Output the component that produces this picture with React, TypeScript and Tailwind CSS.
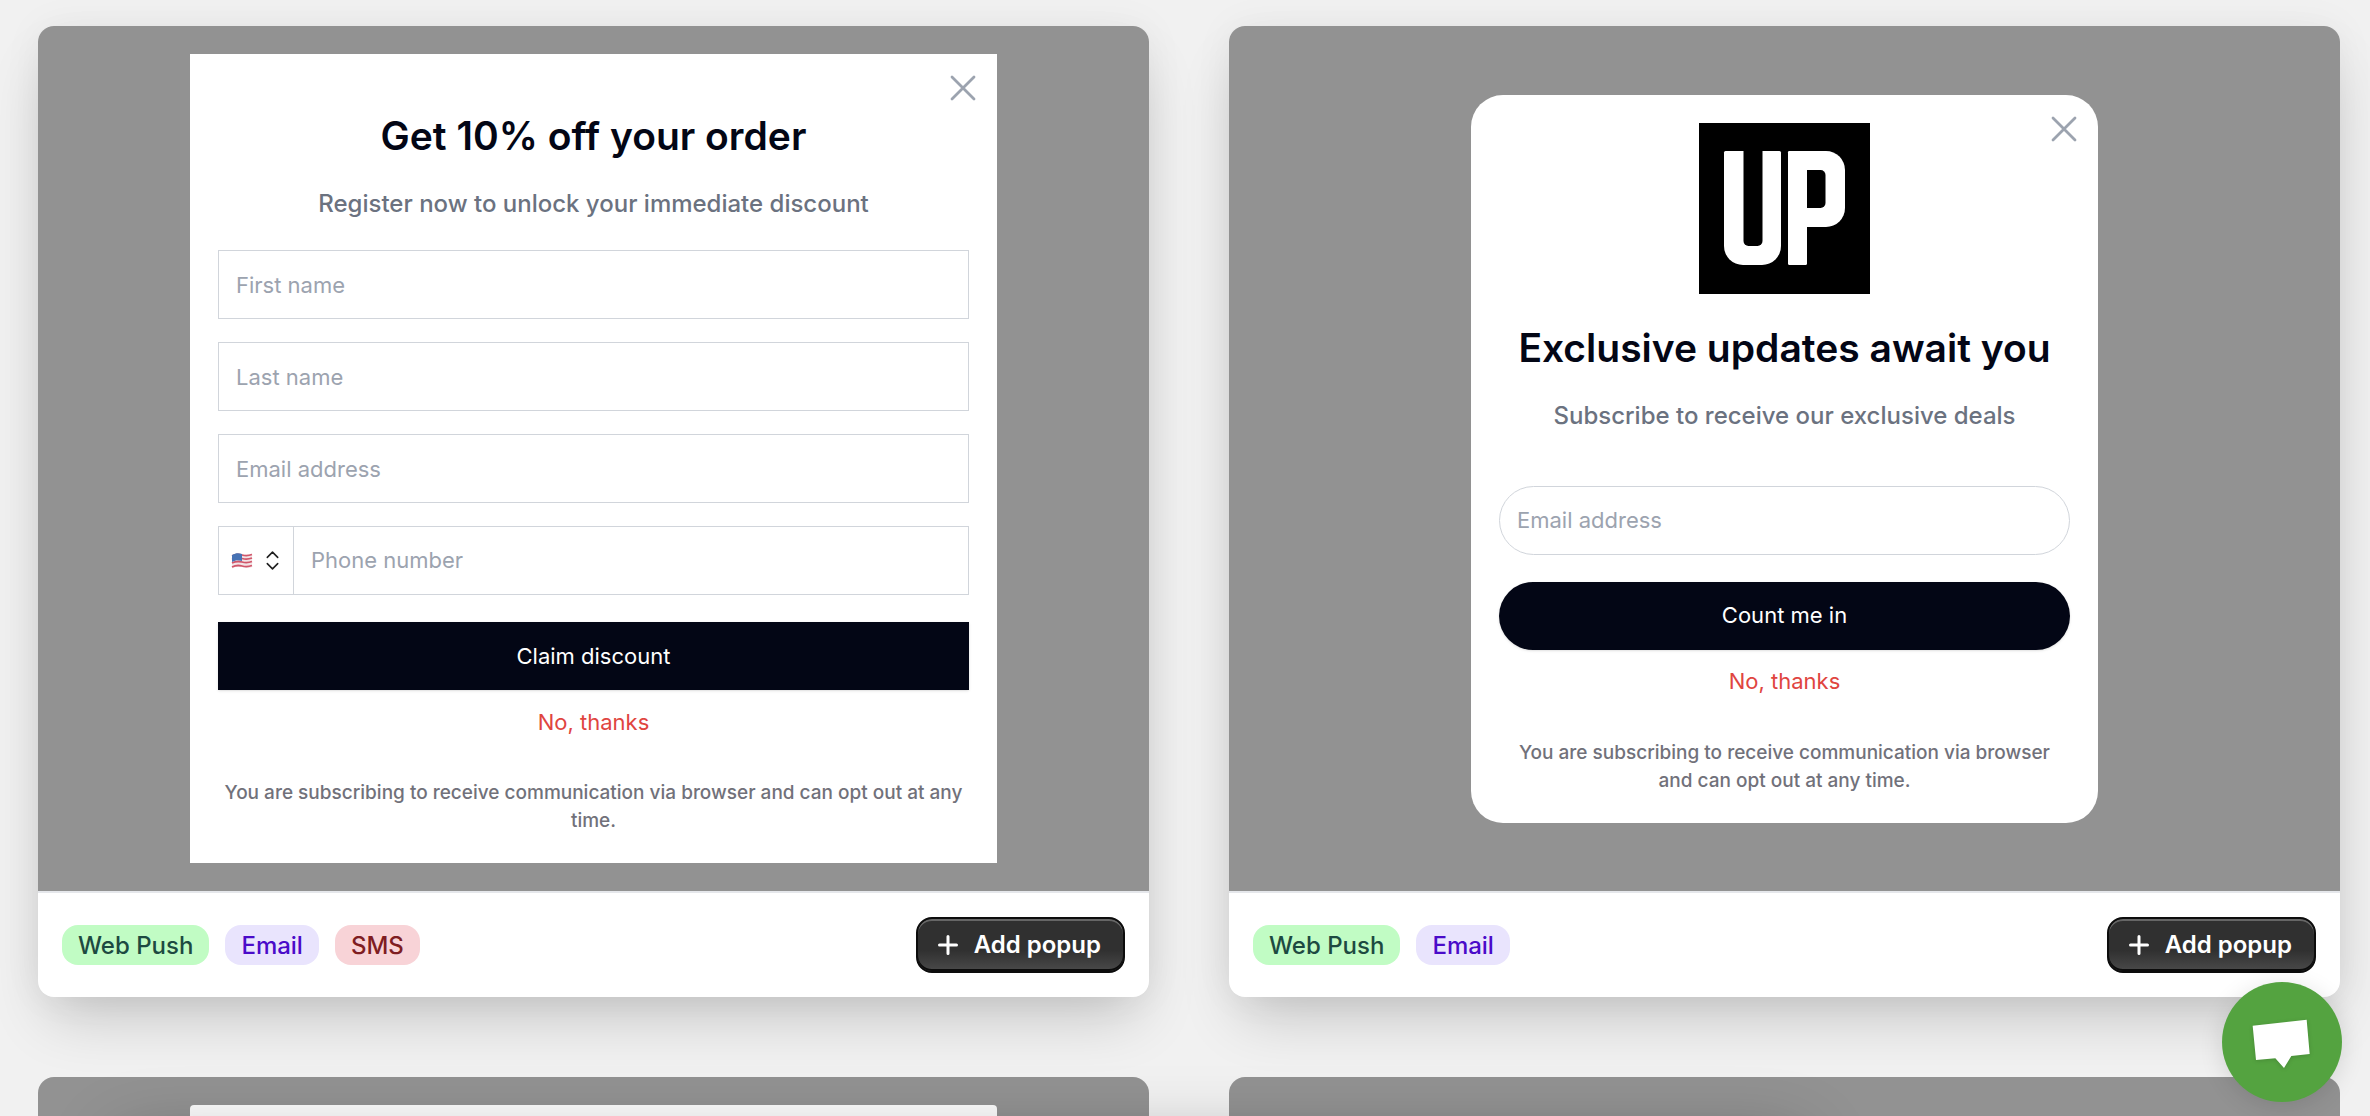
import type { ReactNode } from 'react'
import { ChevronsUpDown } from 'lucide-react'

const TAG_STYLES = {
  'Web Push': 'bg-[#c1fcc4] text-[#1d4a41]',
  Email: 'bg-[#e9e4fd] text-[#4a0bc9]',
  SMS: 'bg-[#f8d3d7] text-[#7f1d22]',
}

type Tag = keyof typeof TAG_STYLES

export default function App() {
  return (
    <main className="h-screen overflow-hidden bg-[#f1f1f1] pt-[26px] pr-[30px] pl-[38px] font-['Inter',sans-serif]">
      <div className="grid grid-cols-2 gap-20">
        <TemplateCard tags={['Web Push', 'Email', 'SMS']}>
          <DiscountPopup />
        </TemplateCard>
        <TemplateCard tags={['Web Push', 'Email']}>
          <UpdatesPopup />
        </TemplateCard>

        <div className="flex h-[865px] items-center justify-center rounded-t-2xl bg-[#929292] p-7">
          <div className="h-full w-[807px] rounded bg-[#fcfcfc]" />
        </div>
        <div className="h-[865px] rounded-t-2xl bg-[#929292]" />
      </div>

      {/* Soft shade along the bottom of the window */}
      <div className="pointer-events-none fixed -bottom-46 left-[5%] h-40 w-[71%] shadow-[0_0_70px_rgba(0,0,0,0.28)]" />

      {/* Chat launcher */}
      <button
        type="button"
        aria-label="Open chat"
        className="fixed right-7 bottom-[14px] h-[120px] w-[120px] rounded-full bg-[#54a340] shadow-[0_4px_24px_rgba(0,0,0,0.12)]"
      >
        <svg viewBox="0 0 360 360" className="h-full w-full drop-shadow-sm" fill="#fff">
          <path d="M92 131 254 113 263 216 208 222 186 258 160 229 102 234Z" />
        </svg>
      </button>
    </main>
  )
}

// ── Popups ─────────────────────────────────────────────────────────────────────

function DiscountPopup() {
  return (
    <form className="relative w-[807px] bg-white px-7 pt-14 pb-7 text-center">
      <CloseButton />
      <h2 className="text-[39px] leading-[52px] font-semibold text-[#030615]">Get 10% off your order</h2>
      <p className="mt-6 text-2xl leading-9 font-medium text-[#6b7280]">Register now to unlock your immediate discount</p>
      <div className="mt-7 flex flex-col gap-[23px]">
        <TextField label="First name" />
        <TextField label="Last name" />
        <TextField label="Email address" type="email" />
        <div className="flex h-[69px] border border-[#d1d5db]">
          <div className="relative flex w-[75px] items-center justify-between border-r border-[#d1d5db] pr-2 pl-3">
            <FlagIcon />
            <ChevronsUpDown size={25} strokeWidth={1.5} className="text-[#1f1f1f]" />
            <select aria-label="Country" className="absolute inset-0 h-full w-full opacity-0">
              <option>US</option>
            </select>
          </div>
          <input
            type="tel"
            aria-label="Phone number"
            placeholder="Phone number"
            className="min-w-0 flex-1 px-[17px] text-[22px] outline-none placeholder:text-[#9ca3af]"
          />
        </div>
      </div>
      <button type="button" className="mt-[27px] h-[68px] w-full bg-[#030615] text-[22px] text-white shadow-sm">
        Claim discount
      </button>
      <DeclineButton />
      <Terms />
    </form>
  )
}

function UpdatesPopup() {
  return (
    <form className="relative w-[627px] rounded-[32px] bg-white p-7 text-center">
      <CloseButton />
      <Logo />
      <h2 className="mt-7 text-[39px] leading-[52px] font-semibold text-[#030615]">Exclusive updates await you</h2>
      <p className="mt-6 mb-[52px] text-2xl leading-9 font-medium text-[#6b7280]">Subscribe to receive our exclusive deals</p>
      <TextField label="Email address" type="email" round />
      <button type="button" className="mt-[27px] h-[68px] w-full rounded-full bg-[#030615] text-[22px] text-white shadow-sm">
        Count me in
      </button>
      <DeclineButton />
      <Terms />
    </form>
  )
}

// ── Sub-components ─────────────────────────────────────────────────────────────

function TemplateCard({ tags, children }: { tags: Tag[]; children: ReactNode }) {
  return (
    <section className="overflow-hidden rounded-2xl bg-white shadow-[0_0_40px_rgba(0,0,0,0.05),0_30px_60px_-12px_rgba(0,0,0,0.19)]">
      <div className="flex h-[865px] items-center justify-center bg-[#929292]">{children}</div>
      <div className="flex items-center justify-between border-t-2 border-[#e5e7eb] p-6">
        <div className="flex gap-4">
          {tags.map((tag) => (
            <span key={tag} className={`rounded-2xl px-4 pt-0.5 text-2xl leading-[38px] font-medium ${TAG_STYLES[tag]}`}>
              {tag}
            </span>
          ))}
        </div>
        <button
          type="button"
          className="flex h-14 items-center gap-[14px] rounded-2xl border-2 border-[#0c0c0c] bg-linear-to-b from-[#303030] from-60% to-[#4a4a4a] pr-[22px] pl-[18px] text-2xl font-semibold text-white shadow-[inset_0_-2px_0_#0c0c0c,inset_0_2px_0_#666]"
        >
          <PlusIcon />
          Add popup
        </button>
      </div>
    </section>
  )
}

function TextField({ label, type = 'text', round }: { label: string; type?: string; round?: boolean }) {
  return (
    <input
      type={type}
      aria-label={label}
      placeholder={label}
      className={`block h-[69px] w-full border border-[#d1d5db] bg-white px-[17px] text-[22px] outline-none placeholder:text-[#9ca3af] ${round ? 'rounded-full' : ''}`}
    />
  )
}

function DeclineButton() {
  return (
    <button type="button" className="mt-3 block h-10 w-full text-[22px] text-[#e0453f]">
      No, thanks
    </button>
  )
}

function Terms() {
  return (
    <p className="mt-[37px] px-0.5 text-[19px] leading-7 font-medium text-[#71717a]">
      You are subscribing to receive communication via browser and can opt out at any time.
    </p>
  )
}

function CloseButton() {
  return (
    <button type="button" aria-label="Close" className="absolute top-5 right-5 text-[#9ca3af]">
      <svg width="28" height="28" viewBox="0 0 28 28" fill="none" stroke="currentColor" strokeWidth="2.8" strokeLinecap="round">
        <path d="M3 3 25 25M25 3 3 25" />
      </svg>
    </button>
  )
}

function PlusIcon() {
  return (
    <svg width="24" height="24" viewBox="0 0 24 24" fill="none" stroke="currentColor" strokeWidth="3" strokeLinecap="round">
      <path d="M12 3.500V20.500M3.500 12H20.500" />
    </svg>
  )
}

function FlagIcon() {
  return (
    <svg width="22" height="18" viewBox="0 0 22 18">
      <path d="M1 3C5 1 7 1 11 2S17 3 21 1.500V15C17 16.500 15 16 11 15S5 14.500 1 16.500Z" fill="#f3e3e5" />
      <path
        d="M1 4C5 2 7 2 11 3S17 4 21 2.500M1 7.500C5 5.500 7 5.500 11 6.500S17 7.500 21 6M1 11C5 9 7 9 11 10S17 11 21 9.500M1 15C5 13 7 13 11 14S17 15 21 13.500"
        fill="none"
        stroke="#d0566a"
        strokeWidth="1.800"
      />
      <path d="M1 3C5 1 7 1 11 2V9C7 8 5 8 1 10Z" fill="#4672b4" />
    </svg>
  )
}

function Logo() {
  return (
    <svg viewBox="0 0 171 171" className="mx-auto h-[171px] w-[171px]" role="img" aria-label="UP">
      <rect width="171" height="171" />
      <g fill="#fff">
        <rect x="25" y="28" width="57" height="114" rx="19" />
        <rect x="25" y="28" width="20" height="40" rx="1.5" />
        <rect x="63" y="28" width="19" height="40" rx="1.5" />
        <rect x="89" y="28" width="57" height="76" rx="19" />
        <rect x="89" y="28" width="30" height="76" rx="1.5" />
        <rect x="89" y="28" width="19" height="114" rx="1.5" />
      </g>
      <rect x="44.5" y="20" width="19" height="103" rx="5" />
      <rect x="108" y="47" width="18.5" height="38" rx="5" />
      <rect x="108" y="47" width="10" height="38" />
    </svg>
  )
}
